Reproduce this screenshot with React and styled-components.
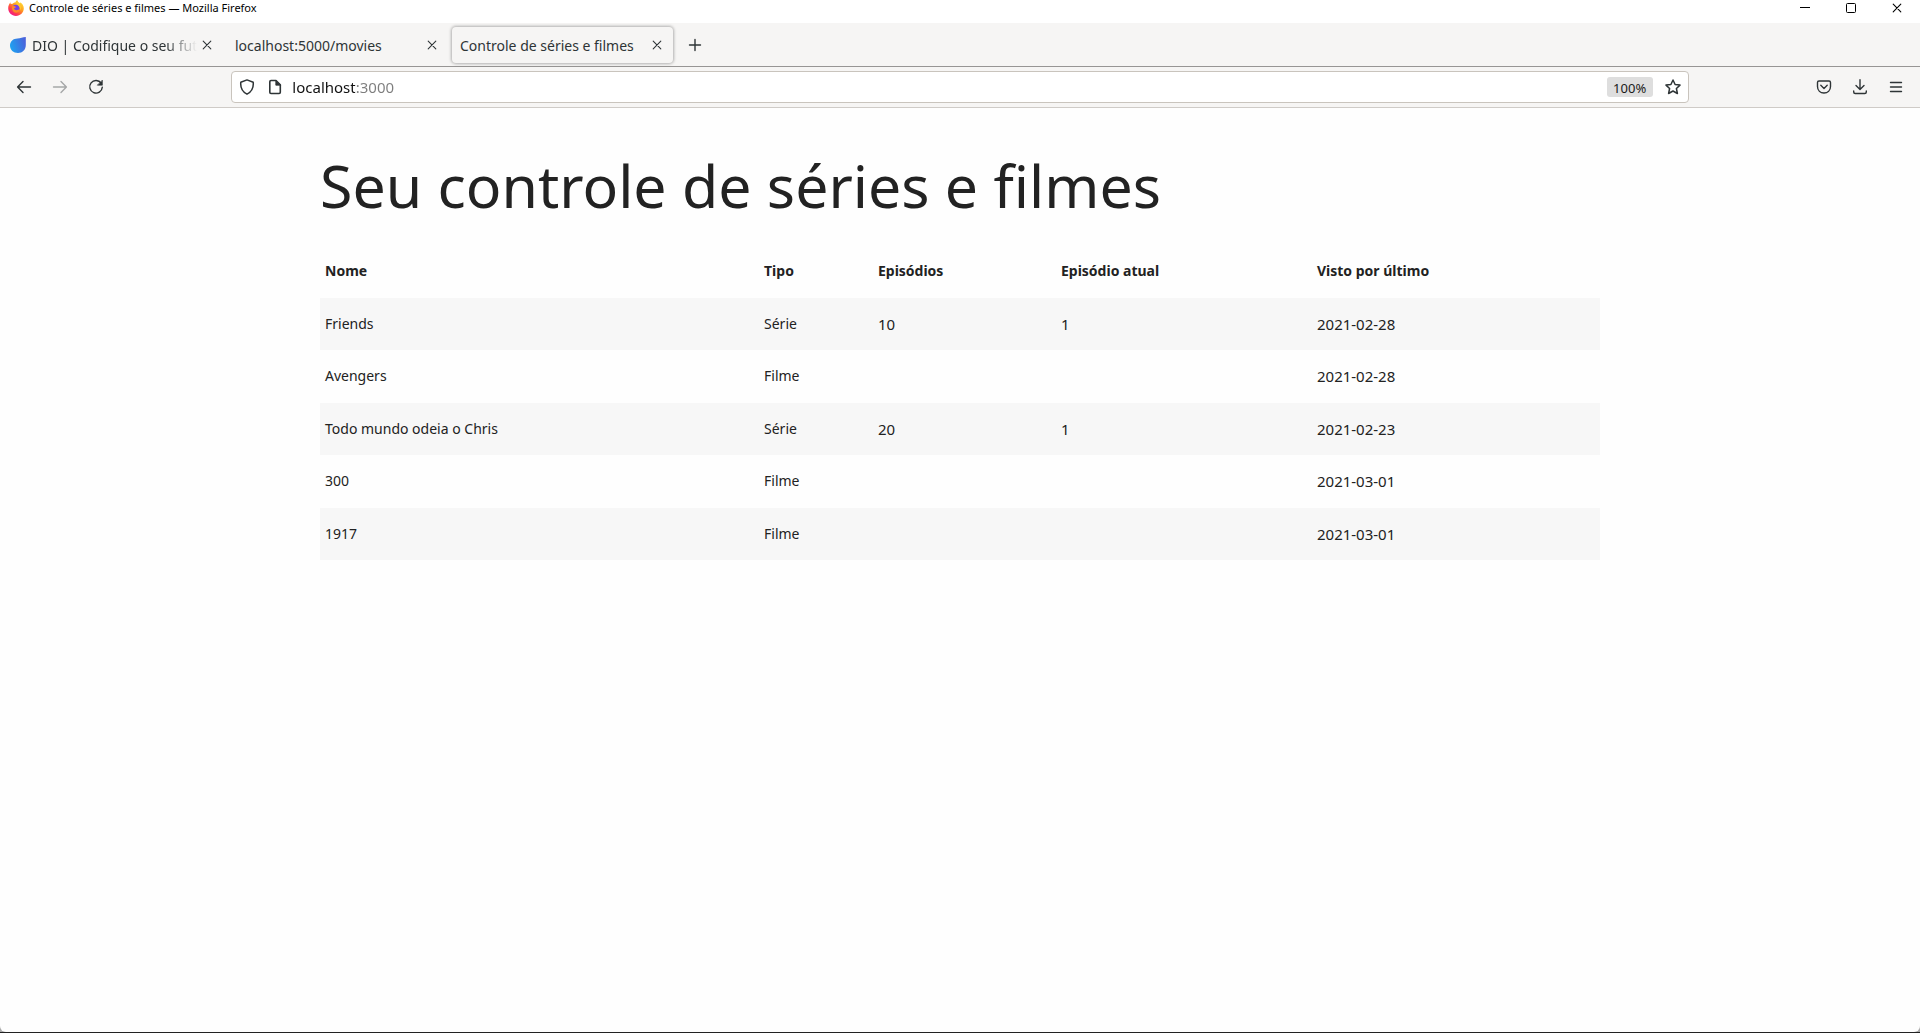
import React, { useState } from "react";
import styled, { createGlobalStyle, css } from "styled-components";

const GlobalStyle = createGlobalStyle`
  *, *::before, *::after { box-sizing: border-box; }
  body {
    margin: 0;
    background: #a9a9a9;
    font-family: "Noto Sans", "Open Sans", sans-serif;
    font-size: 14px;
    color: #222222;
  }
  button { font: inherit; color: inherit; }
`;

const Desktop = styled.div`
  min-height: 100vh;
  display: flex;
  flex-direction: column;
  border-bottom: 1px solid #222222;
`;

const BrowserWindow = styled.div`
  flex: 1;
  display: flex;
  flex-direction: column;
  background: #fefefe;
  border-radius: 0 0 6px 6px;
`;

const TitleBar = styled.header`
  display: flex;
  justify-content: space-between;
  height: 23px;
  background: #ffffff;
`;

const WindowTitle = styled.div`
  display: flex;
  align-items: center;
  gap: 5px;
  height: 15px;
  padding-left: 8px;
  font-size: 11px;
  line-height: 15px;
  color: #000000;
`;

const WindowControls = styled.div`
  display: flex;
`;

const WindowButton = styled.button`
  display: grid;
  place-items: center;
  width: 46px;
  height: 15px;
  padding: 0;
  border: 0;
  background: transparent;
  color: #000000;
`;

const TabBar = styled.div`
  display: flex;
  align-items: center;
  height: 44px;
  background: #f6f5f4;
  border-bottom: 1px solid #979594;
`;

const TabSlot = styled.div`
  flex: 0 1 225px;
  min-width: 0;
  padding: 0 2px;
`;

const TabBox = styled.div`
  display: flex;
  align-items: center;
  height: 36px;
  padding: 0 6px 0 8px;
  border-radius: 4px;
  ${(p) =>
    p.$active &&
    css`
      box-shadow: 0 0 3px 1px rgba(0, 0, 0, 0.28);
    `}
`;

const TabTitle = styled.button`
  flex: 1;
  min-width: 0;
  display: flex;
  align-items: center;
  gap: 6px;
  padding: 0;
  border: 0;
  background: transparent;
  color: #2e3436;
  text-align: left;
  svg { flex: none; }
`;

const TabLabel = styled.span`
  flex: 1;
  min-width: 0;
  padding-top: 2px;
  overflow: hidden;
  white-space: nowrap;
  line-height: 20px;
  ${(p) =>
    p.$faded &&
    css`
      mask-image: linear-gradient(to left, transparent, #000000 32px);
    `}
`;

const IconButton = styled.button`
  flex: none;
  display: grid;
  place-items: center;
  width: ${(p) => p.$size}px;
  height: ${(p) => p.$size}px;
  padding: 0;
  border: 0;
  background: transparent;
  color: #2e3436;
  &:disabled { opacity: 0.4; }
`;

const NavBar = styled.nav`
  display: flex;
  align-items: center;
  height: 41px;
  padding: 0 6px;
  background: #f6f5f4;
  border-bottom: 1px solid #cfcbc7;
`;

const Spring = styled.div`
  flex: 13;
`;

const UrlBar = styled.div`
  flex: 161;
  display: flex;
  align-items: center;
  height: 32px;
  padding: 0 1px;
  background: #ffffff;
  border: 1px solid #c9c4bd;
  border-radius: 4px;
`;

const UrlInput = styled.input`
  flex: 1;
  min-width: 0;
  height: 28px;
  padding: 0;
  margin-left: 3px;
  border: 0;
  outline: 0;
  font: 15px "Noto Sans", "Open Sans", sans-serif;
  background: linear-gradient(to right, #111111 63px, #7d7d7d 63px);
  background-clip: text;
  -webkit-background-clip: text;
  color: transparent;
  caret-color: #111111;
`;

const ZoomButton = styled.button`
  height: 20px;
  width: 46px;
  padding: 2px 0 0;
  margin-right: 6px;
  border: 0;
  border-radius: 3px;
  background: #dedede;
  color: #1a1a1a;
  font-size: 13px;
  line-height: 18px;
`;

const Page = styled.main`
  width: 70%;
  max-width: 1280px;
  margin: 0 auto;
`;

const Heading = styled.h1`
  margin: 42px 0 25px;
  font-size: 59px;
  font-weight: 400;
  line-height: 70px;
`;

const MovieTable = styled.table`
  width: 100%;
  table-layout: fixed;
  border-collapse: collapse;
  font-size: 15px;
  line-height: 150%;
`;

const Column = styled.col`
  width: ${(p) => p.$share}%;
`;

const HeaderCell = styled.th`
  padding: 15px 5px;
  text-align: left;
  font-size: 14px;
  font-weight: 700;
`;

const Row = styled.tr`
  &:nth-child(odd) { background: #f7f7f7; }
`;

const Cell = styled.td`
  padding: 15px 5px;
  font-size: ${(p) => (p.$numeric ? 15 : 14)}px;
`;

const Icon = ({ size = 16, children, ...rest }) => (
  <svg width={size} height={size} viewBox={`0 0 ${size} ${size}`} fill="none" stroke="currentColor" strokeWidth="1.4" strokeLinecap="round" strokeLinejoin="round" aria-hidden="true" {...rest}>
    {children}
  </svg>
);

const FirefoxLogo = () => (
  <svg width="16" height="16" viewBox="0 0 16 16" aria-hidden="true">
    <defs>
      <linearGradient id="flame" x1="0.85" y1="0.1" x2="0.2" y2="0.95">
        <stop offset="0" stopColor="#ffe03a" />
        <stop offset="0.4" stopColor="#ff9a1f" />
        <stop offset="0.7" stopColor="#ff4447" />
        <stop offset="1" stopColor="#f0148c" />
      </linearGradient>
    </defs>
    <path d="M2.6 2.2C2.4 3 2.5 3.6 2.7 4.1L4.6 3.8C5.4 2.8 6.4 2.4 7.3 2.4C7.6 1.5 8.3.7 9.2.2C9.3 1.7 10.8 2.4 11.9 3.4C12 2.9 11.9 2.5 11.8 2.2C14.4 3.4 15.8 5.8 15.8 8.3C15.8 12.6 12.4 15.9 8 15.9S.2 12.6.2 8.3C.2 5.9 1.1 3.6 2.6 2.2Z" fill="url(#flame)" />
    <circle cx="8" cy="8.4" r="3.7" fill="#7542e5" />
    <path d="M4.3 6.2C5.5 5.6 7 5.9 8 6.9C7.6 7.8 6.6 7.6 6 8.1C6.2 9.4 7.2 10.3 8.4 10.3C10.1 10.3 11.3 9.3 11.8 8C12.4 10.8 10.5 12.7 8.2 12.7C5.3 12.7 3.2 9.6 4.3 6.2Z" fill="#ff8a27" />
    <path d="M9.2.2C9.3 2.5 13 3.4 13.2 7.3C13.2 8.7 12.7 9.8 12 10.5C12.5 7.6 10.7 6 9.3 4.8C7.4 3.2 8.1 1 9.2.2Z" fill="#ffc62c" />
  </svg>
);

const DioLogo = () => (
  <svg width="16" height="16" viewBox="0 0 16 16" aria-hidden="true">
    <defs>
      <linearGradient id="drop" x1="0" y1="0.6" x2="1" y2="0.3">
        <stop offset="0" stopColor="#1ea2f0" />
        <stop offset="1" stopColor="#4a60da" />
      </linearGradient>
    </defs>
    <path d="M15.8 0V8C15.8 12.8 12.4 16 8 16C3.4 16 0 12.9 0 8.5C0 4.2 3.3 1.4 7.5 1.4C10.5 1.4 12.5 .2 15.8 0Z" fill="url(#drop)" />
  </svg>
);

const CloseGlyph = () => (
  <Icon size={10} strokeWidth="1.1"><path d="M1.2 1.2L8.8 8.8M8.8 1.2L1.2 8.8" /></Icon>
);

const BackIcon = () => (
  <Icon><path d="M14.5 8H1.8M7 2.6L1.6 8L7 13.4" /></Icon>
);

const ForwardIcon = () => (
  <Icon><path d="M1.5 8H14.2M9 2.6L14.4 8L9 13.4" /></Icon>
);

const ReloadIcon = () => (
  <Icon>
    <path d="M13.2 4.2A6.3 6.3 0 1 0 14.3 8.3" />
    <path d="M14.4 1.4V6.2H9.6Z" fill="currentColor" strokeWidth="0.6" />
  </Icon>
);

const ShieldIcon = () => (
  <Icon><path d="M8 .9L14.2 3.3C14.7 8.2 12.5 12.9 8 15.2C3.5 12.9 1.3 8.2 1.8 3.3Z" strokeWidth="1.5" /></Icon>
);

const PageIcon = () => (
  <Icon strokeWidth="1.6">
    <path d="M4 1.5H9L13.3 5.8V13.3Q13.3 14.5 12.1 14.5H4Q2.8 14.5 2.8 13.3V2.7Q2.8 1.5 4 1.5Z" />
    <path d="M8.8 1.8V6.2H13.1Z" fill="currentColor" strokeWidth="0.8" />
  </Icon>
);

const StarIcon = () => (
  <Icon strokeWidth="1.5"><path d="M8 1L10.1 5.5L15 6.1L11.4 9.5L12.4 14.5L8 12L3.6 14.5L4.6 9.5L1 6.1L5.9 5.5Z" /></Icon>
);

const PocketIcon = () => (
  <Icon>
    <path d="M3 2H13Q14.5 2 14.5 3.5V7.5C14.5 11.5 11.6 14 8 14S1.5 11.5 1.5 7.5V3.5Q1.5 2 3 2Z" />
    <path d="M4.8 6.3L8 9.4L11.2 6.3" />
  </Icon>
);

const DownloadIcon = () => (
  <Icon>
    <path d="M8 .8V10.4M4 6.6L8 10.6L12 6.6M1.7 12V13Q1.7 14.5 3.2 14.5H12.8Q14.3 14.5 14.3 13V12" />
  </Icon>
);

const MenuIcon = () => (
  <Icon><path d="M2.5 3.5H13.5M2.5 8H13.5M2.5 12.5H13.5" /></Icon>
);

const PlusIcon = () => (
  <Icon><path d="M8 2.5V13.5M2.5 8H13.5" /></Icon>
);

const tabs = [
  { title: "DIO | Codifique o seu futur", logo: true, faded: true },
  { title: "localhost:5000/movies" },
  { title: "Controle de séries e filmes", active: true },
];

const columns = [
  { label: "Nome", share: 34.3 },
  { label: "Tipo", share: 8.9 },
  { label: "Episódios", share: 14.3, numeric: true },
  { label: "Episódio atual", share: 20, numeric: true },
  { label: "Visto por último", share: 22.5, numeric: true },
];

const movies = [
  ["Friends", "Série", "10", "1", "2021-02-28"],
  ["Avengers", "Filme", "", "", "2021-02-28"],
  ["Todo mundo odeia o Chris", "Série", "20", "1", "2021-02-23"],
  ["300", "Filme", "", "", "2021-03-01"],
  ["1917", "Filme", "", "", "2021-03-01"],
];

export default function App() {
  const [url, setUrl] = useState("localhost:3000");

  return (
    <Desktop>
      <GlobalStyle />
      <BrowserWindow>
        <TitleBar>
          <WindowTitle>
            <FirefoxLogo />
            <span>Controle de séries e filmes — Mozilla Firefox</span>
          </WindowTitle>
          <WindowControls>
            <WindowButton aria-label="Minimizar">
              <svg width="10" height="10" aria-hidden="true"><path d="M0 4.5H10" stroke="currentColor" /></svg>
            </WindowButton>
            <WindowButton aria-label="Maximizar">
              <svg width="10" height="10" aria-hidden="true"><rect x="0.5" y="0.5" width="9" height="9" rx="1" fill="none" stroke="currentColor" /></svg>
            </WindowButton>
            <WindowButton aria-label="Fechar">
              <CloseGlyph />
            </WindowButton>
          </WindowControls>
        </TitleBar>

        <TabBar>
          {tabs.map((tab) => (
            <TabSlot key={tab.title}>
              <TabBox $active={tab.active}>
                <TabTitle aria-current={tab.active ? "page" : undefined}>
                  {tab.logo && <DioLogo />}
                  <TabLabel $faded={tab.faded}>{tab.title}</TabLabel>
                </TabTitle>
                <IconButton $size={20} aria-label="Fechar aba">
                  <CloseGlyph />
                </IconButton>
              </TabBox>
            </TabSlot>
          ))}
          <IconButton $size={40} aria-label="Nova aba"><PlusIcon /></IconButton>
        </TabBar>

        <NavBar>
          <IconButton $size={36} aria-label="Voltar"><BackIcon /></IconButton>
          <IconButton $size={36} aria-label="Avançar" disabled><ForwardIcon /></IconButton>
          <IconButton $size={36} aria-label="Recarregar"><ReloadIcon /></IconButton>
          <Spring />
          <UrlBar>
            <IconButton $size={28} aria-label="Proteção"><ShieldIcon /></IconButton>
            <IconButton $size={28} aria-label="Informações do site"><PageIcon /></IconButton>
            <UrlInput aria-label="Endereço" value={url} onChange={(e) => setUrl(e.target.value)} />
            <ZoomButton>100%</ZoomButton>
            <IconButton $size={28} aria-label="Favoritar"><StarIcon /></IconButton>
          </UrlBar>
          <Spring />
          <IconButton $size={36} aria-label="Salvar no Pocket"><PocketIcon /></IconButton>
          <IconButton $size={36} aria-label="Downloads"><DownloadIcon /></IconButton>
          <IconButton $size={36} aria-label="Menu"><MenuIcon /></IconButton>
        </NavBar>

        <Page>
          <Heading>Seu controle de séries e filmes</Heading>
          <MovieTable>
            <colgroup>
              {columns.map((column) => (
                <Column key={column.label} $share={column.share} />
              ))}
            </colgroup>
            <thead>
              <tr>
                {columns.map((column) => (
                  <HeaderCell key={column.label} scope="col">{column.label}</HeaderCell>
                ))}
              </tr>
            </thead>
            <tbody>
              {movies.map((movie) => (
                <Row key={movie[0]}>
                  {movie.map((value, index) => (
                    <Cell key={columns[index].label} $numeric={columns[index].numeric}>{value}</Cell>
                  ))}
                </Row>
              ))}
            </tbody>
          </MovieTable>
        </Page>
      </BrowserWindow>
    </Desktop>
  );
}
